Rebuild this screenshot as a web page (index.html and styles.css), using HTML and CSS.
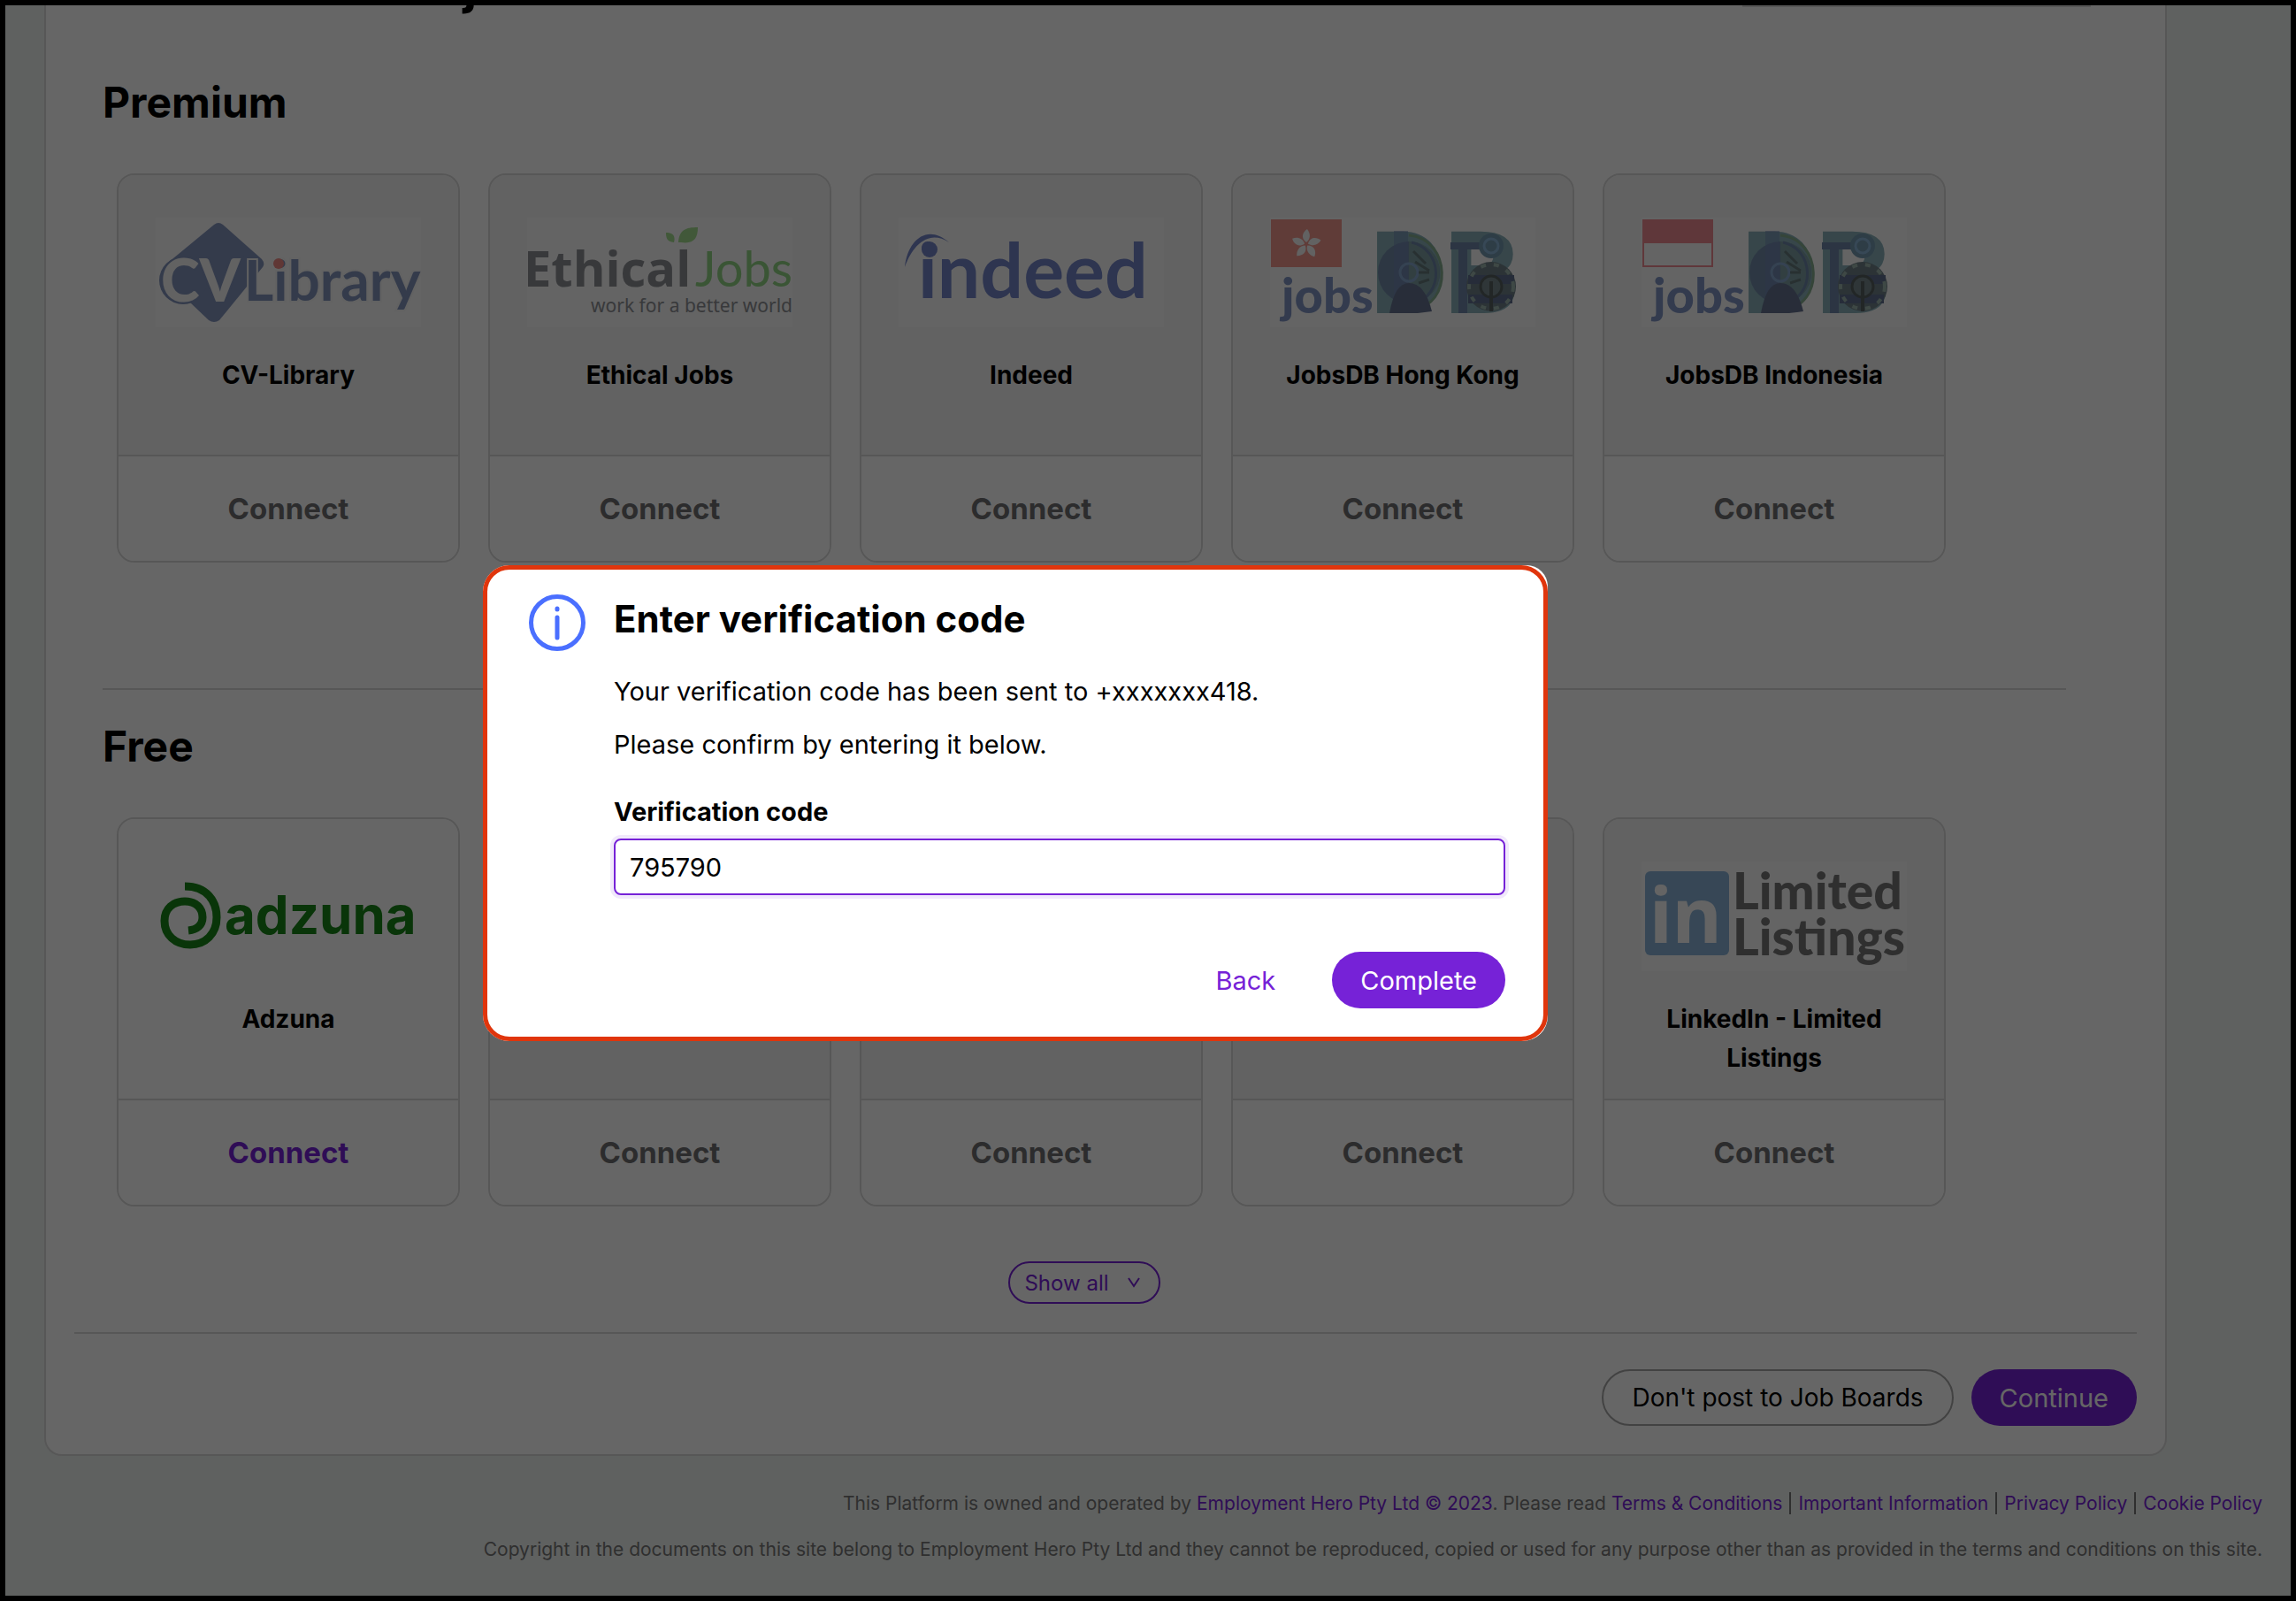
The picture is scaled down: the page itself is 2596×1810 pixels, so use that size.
FILE: index.html
```html
<!DOCTYPE html>
<html lang="en">
<head>
<meta charset="utf-8">
<title>Job boards - Enter verification code</title>
<link rel="stylesheet" href="styles.css">
</head>
<body>
<main class="panel">
  <div class="panel-top">
    <span class="panel-top-title">j</span>
    <span class="panel-top-field"></span>
  </div>

  <section class="boards">
    <h2 class="boards-title">Premium</h2>
    <ul class="cards">
      <li class="card">
        <div class="card-head">
          <svg class="logo logo-framed" viewBox="0 0 300 124" aria-hidden="true">
            <path d="M66 8q5-4 10 0l44 39q4 5 1 9l-49 60q-6 4-12 0l-42-40 2-30z" fill="#8293bb"/>
            <circle cx="31" cy="71" r="27" fill="#8293bb"/>
            <text class="cv-letters" x="6" y="95">CV</text>
            <text class="cv-library" x="100" y="94">Library</text>
            <circle cx="139" cy="52" r="6" fill="#ef8a84"/>
          </svg>
          <h3 class="card-title">CV-Library</h3>
        </div>
        <button class="connect" type="button" disabled>Connect</button>
      </li>
      <li class="card">
        <div class="card-head">
          <svg class="logo logo-framed" viewBox="0 0 300 124" aria-hidden="true">
            <text class="ethical" x="-4" y="78">Ethical</text>
            <text class="ethical-jobs" x="190" y="78">Jobs</text>
            <text class="ethical-tag" x="300" y="107" text-anchor="end">work for a better world</text>
            <path d="M171 28c1-14 8-17 22-17 0 13-5 19-19 17zM166 28c-8-1-9-5-9-11 8 0 11 4 9 11z" fill="#a2dd90"/>
          </svg>
          <h3 class="card-title">Ethical Jobs</h3>
        </div>
        <button class="connect" type="button" disabled>Connect</button>
      </li>
      <li class="card">
        <div class="card-head">
          <svg class="logo logo-framed" viewBox="0 0 300 124" aria-hidden="true">
            <text class="indeed" x="22" y="91">indeed</text>
            <circle cx="35" cy="36" r="9" fill="#7384c8"/>
            <path d="M7 56C10 26 32 6 57 28 35 13 16 30 7 56z" fill="#7384c8"/>
          </svg>
          <h3 class="card-title">Indeed</h3>
        </div>
        <button class="connect" type="button" disabled>Connect</button>
      </li>
      <li class="card">
        <div class="card-head">
          <svg class="logo logo-framed" viewBox="0 0 300 124" aria-hidden="true">
            <rect x="1" y="2" width="80" height="54" fill="#f0968c"/>
            <g fill="#f4f4f4" transform="translate(41 30)">
              <path id="petal" d="M0-2C-7-7-4-14 1-17 5-12 5-6 0-2z"/>
              <use href="#petal" transform="rotate(72)"/>
              <use href="#petal" transform="rotate(144)"/>
              <use href="#petal" transform="rotate(216)"/>
              <use href="#petal" transform="rotate(288)"/>
            </g>
            <g id="jobsdb">
              <text class="jobs" x="13" y="108">jobs</text>
              <text class="db" x="114" y="108">DB</text>
              <circle cx="157" cy="62" r="35" fill="#7289a8"/>
              <path d="M157 27a35 35 0 0 1 0 70z" fill="#7d9fa4"/>
              <path d="M140 15h16v93h-16z" fill="#6f86b4" opacity=".5"/>
              <g fill="none" stroke-width="3">
                <circle cx="157" cy="62" r="10" stroke="#86a6cc"/>
                <path d="M157 20c48 4 50 80 4 84" stroke="#84ac90"/>
                <path d="M160 28c36 8 36 60 4 68" stroke="#6d84a8"/>
                <path d="M162 38l14 14M168 62h12M164 50l16 10M168 74l12-4" stroke="#64797c"/>
              </g>
              <path d="M135 108q6-34 22-34 18 0 26 32l-16 2z" fill="#657290"/>
              <path d="M204 28h36v8h-36zM213 36h10v72h-10z" fill="#6f86a8"/>
              <circle cx="250" cy="32" r="14" fill="#7498b0"/>
              <circle cx="250" cy="32" r="8" fill="none" stroke="#8ab4d8" stroke-width="3"/>
              <circle cx="250" cy="78" r="28" fill="#6f8088"/>
              <path d="M224 70h52M224 92h50" stroke="#5f6f90" stroke-width="10"/>
              <circle cx="250" cy="78" r="25" fill="none" stroke="#9cb4ac" stroke-width="4" stroke-dasharray="6 9"/>
              <circle cx="250" cy="78" r="12" fill="#76888c" stroke="#566060" stroke-width="3"/>
              <path d="M250 72v34" stroke="#566060" stroke-width="4"/>
            </g>
          </svg>
          <h3 class="card-title">JobsDB Hong Kong</h3>
        </div>
        <button class="connect" type="button" disabled>Connect</button>
      </li>
      <li class="card">
        <div class="card-head">
          <svg class="logo logo-framed" viewBox="0 0 300 124" aria-hidden="true">
            <rect x="2" y="3" width="78" height="52" fill="#fafafa" stroke="#ee8a91" stroke-width="2"/>
            <rect x="1" y="2" width="80" height="27" fill="#ee8a91"/>
            <use href="#jobsdb"/>
          </svg>
          <h3 class="card-title">JobsDB Indonesia</h3>
        </div>
        <button class="connect" type="button" disabled>Connect</button>
      </li>
    </ul>
  </section>

  <section class="boards boards-divided">
    <h2 class="boards-title">Free</h2>
    <ul class="cards">
      <li class="card">
        <div class="card-head card-head-active">
          <svg class="logo" viewBox="0 0 300 124" aria-hidden="true">
            <path d="M33 28C58 28 69 45 69 63 69 82 56 94 39 94 22 94 10 83 10 67 10 53 20 45 33 45 46 45 53 53 53 63 53 72 47 77 37 78" fill="none" stroke="#188418" stroke-width="9"/>
            <text class="adzuna" x="78" y="82">adzuna</text>
          </svg>
          <h3 class="card-title">Adzuna</h3>
        </div>
        <button class="connect connect-active" type="button">Connect</button>
      </li>
      <li class="card">
        <div class="card-head"></div>
        <button class="connect" type="button" disabled>Connect</button>
      </li>
      <li class="card">
        <div class="card-head"></div>
        <button class="connect" type="button" disabled>Connect</button>
      </li>
      <li class="card">
        <div class="card-head"></div>
        <button class="connect" type="button" disabled>Connect</button>
      </li>
      <li class="card">
        <div class="card-head">
          <svg class="logo logo-framed" viewBox="0 0 300 124" aria-hidden="true">
            <rect x="4" y="11" width="95" height="95" rx="6" fill="#8ab2d6"/>
            <text class="linkedin-in" x="9" y="92">in</text>
            <text class="linkedin-text" x="103" y="54">Limited</text>
            <text class="linkedin-text" x="103" y="106">Listings</text>
          </svg>
          <h3 class="card-title">LinkedIn - Limited Listings</h3>
        </div>
        <button class="connect" type="button" disabled>Connect</button>
      </li>
    </ul>
    <button class="show-all" type="button">Show all
      <svg class="chevron" viewBox="0 0 16 12" aria-hidden="true"><path d="M2 1l6 9 6-9" fill="none" stroke="currentColor" stroke-width="2"/></svg>
    </button>
  </section>

  <div class="actions">
    <button class="button button-outline" type="button">Don't post to Job Boards</button>
    <button class="button button-primary" type="button">Continue</button>
  </div>
</main>

<footer class="footer">
  <p class="footer-line">This Platform is owned and operated by <a href="#">Employment Hero Pty Ltd © 2023</a>. Please read <a href="#">Terms &amp; Conditions</a><a class="footer-link" href="#">Important Information</a><a class="footer-link" href="#">Privacy Policy</a><a class="footer-link" href="#">Cookie Policy</a></p>
  <p class="footer-line">Copyright in the documents on this site belong to Employment Hero Pty Ltd and they cannot be reproduced, copied or used for any purpose other than as provided in the terms and conditions on this site.</p>
</footer>

<div class="overlay">
  <form class="modal" role="dialog" aria-labelledby="modal-title">
    <svg class="info" viewBox="0 0 64 64" aria-hidden="true">
      <circle cx="32" cy="32" r="29.5" fill="none" stroke="#4a6fff" stroke-width="5"/>
      <path d="M32 16v1M32 26v23" stroke="#4a6fff" stroke-width="5" stroke-linecap="round"/>
    </svg>
    <div class="modal-body">
      <h1 class="modal-title" id="modal-title">Enter verification code</h1>
      <p class="modal-text">Your verification code has been sent to +xxxxxxx418.</p>
      <p class="modal-text">Please confirm by entering it below.</p>
      <label class="modal-label" for="code">Verification code</label>
      <input class="modal-input" id="code" type="text" value="795790">
      <div class="modal-actions">
        <button class="button button-text" type="button">Back</button>
        <button class="button button-primary" type="submit">Complete</button>
      </div>
    </div>
  </form>
</div>
</body>
</html>
```
FILE: styles.css
```css
:root {
  --purple: #7622d7;
  --line: #dadada;
}

* {
  box-sizing: border-box;
}

body {
  margin: 0;
  min-height: 100vh;
  border: 6px solid #000;
  background: #eef2f0;
  color: #000;
  font-family: Inter, "Liberation Sans", sans-serif;
  font-size: 29px;
}

h1, h2, h3, p, ul {
  margin: 0;
  padding: 0;
}

button, input {
  font: inherit;
}

a {
  color: var(--purple);
  text-decoration: none;
}

/* Page panel */
.panel {
  margin: 0 140px 0 44px;
  padding: 0 32px 32px;
  border: 2px solid var(--line);
  border-top: 0;
  border-radius: 0 0 20px 20px;
  background: #fff;
}

.panel-top {
  display: flex;
  justify-content: space-between;
  align-items: flex-end;
  height: 10px;
  padding: 0 52px 0 440px;
  overflow: hidden;
}

.panel-top-title {
  font-size: 56px;
  font-weight: 700;
  line-height: 64px;
}

.panel-top-field {
  align-self: flex-start;
  width: 394px;
  height: 2px;
  background: var(--line);
}

/* Job board sections */
.boards {
  display: flex;
  flex-direction: column;
  margin: 0 80px 0 32px;
  padding: 68px 0 142px;
}

.boards-divided {
  padding: 32px 0;
  border-top: 2px solid var(--line);
}

.boards-title {
  font-size: 48px;
  font-weight: 700;
  line-height: 64px;
}

.cards {
  display: grid;
  grid-template-columns: repeat(5, minmax(0, 388px));
  gap: 32px;
  margin: 48px 16px 0;
  list-style: none;
}

.card {
  display: flex;
  flex-direction: column;
  min-height: 440px;
  overflow: hidden;
  border: 2px solid var(--line);
  border-radius: 20px;
}

.card-head {
  display: flex;
  flex: 1;
  flex-direction: column;
  align-items: center;
  gap: 32px;
  padding: 48px 40px 0;
  border-bottom: 2px solid var(--line);
  background: #f4f4f4;
}

.card-head-active {
  background: #fff;
}

.card-title {
  font-size: 28px;
  font-weight: 700;
  line-height: 44px;
  text-align: center;
}

.connect {
  height: 118px;
  border: 0;
  background: #fff;
  color: #6f6f71;
  font-size: 33px;
  font-weight: 700;
}

.connect-active {
  color: var(--purple);
}

.show-all {
  display: flex;
  align-self: center;
  align-items: center;
  gap: 20px;
  height: 48px;
  margin-top: 62px;
  padding: 0 20px 0 16px;
  border: 2px solid var(--purple);
  border-radius: 24px;
  background: #fff;
  color: var(--purple);
  font-size: 24px;
}

.chevron {
  width: 16px;
  height: 12px;
}

/* Logos */
.logo {
  width: 300px;
  height: 124px;
  flex: none;
}

.logo-framed {
  background: #f9f9f9;
}

.cv-letters {
  fill: #f4f4f4;
  stroke: #8293bb;
  stroke-width: 4px;
  paint-order: stroke;
  font: 900 66px Lato, sans-serif;
}

.cv-library {
  fill: #8293bb;
  stroke: #f4f4f4;
  stroke-width: 4px;
  paint-order: stroke;
  font: 700 64px Lato, sans-serif;
}

.ethical {
  fill: #8c8e93;
  font: 700 56px "Open Sans", sans-serif;
}

.ethical-jobs {
  fill: #91d484;
  font: 400 56px Lato, sans-serif;
}

.ethical-tag {
  fill: #8c8e93;
  font: 21px "Noto Sans", sans-serif;
}

.indeed {
  fill: #7384c8;
  font: 700 86px Lato, sans-serif;
}

.db {
  fill: #89b0b8;
  font: 900 130px Roboto, sans-serif;
}

.jobs {
  fill: #8095c4;
  font: 900 56px Lato, sans-serif;
}

.adzuna {
  fill: #188418;
  font: 700 60px Inter, sans-serif;
}

.linkedin-in {
  fill: #f9f9f9;
  font: 700 86px "Noto Sans", sans-serif;
}

.linkedin-text {
  fill: #767676;
  font: 900 57px Lato, sans-serif;
}

/* Buttons */
.actions {
  display: flex;
  justify-content: flex-end;
  gap: 20px;
  padding-top: 40px;
  border-top: 2px solid var(--line);
}

.button {
  height: 64px;
  padding: 0 32px;
  border: 0;
  border-radius: 32px;
  background: none;
}

.button-primary {
  background: var(--purple);
  color: #fff;
}

.button-outline {
  border: 2px solid #a5a5a5;
  background: #fff;
  font-size: 28px;
}

.button-text {
  color: var(--purple);
}

/* Footer */
.footer {
  margin-top: 28px;
  padding: 0 32px 26px;
  color: #777;
  font-size: 21px;
  line-height: 52px;
  text-align: right;
}

.footer-link {
  margin-left: 8px;
  padding-left: 8px;
  border-left: 2px solid #777;
}

/* Verification dialog */
.overlay {
  position: fixed;
  inset: 0;
  display: flex;
  align-items: center;
  justify-content: center;
  padding: 6px 300px 0 0;
  background: rgba(0, 0, 0, 0.6);
}

.modal {
  position: relative;
  display: flex;
  align-items: flex-start;
  gap: 32px;
  width: 1204px;
  padding: 33px 48px 37px 52px;
  border-radius: 30px 24px 28px 30px;
  background: #fff;
}

.modal::after {
  content: "";
  position: absolute;
  inset: 0;
  border: 5px solid #e0350c;
  border-radius: 30px;
  pointer-events: none;
}

.info {
  width: 64px;
  height: 64px;
  flex: none;
}

.modal-body {
  display: flex;
  flex: 1;
  flex-direction: column;
}

.modal-title {
  margin-bottom: 24px;
  font-size: 42px;
  font-weight: 700;
  line-height: 56px;
}

.modal-text {
  line-height: 60px;
}

.modal-label {
  padding: 20px 0 4px;
  font-weight: 700;
  line-height: 52px;
}

.modal-input {
  width: 100%;
  height: 64px;
  padding: 0 16px;
  border: 2px solid var(--purple);
  border-radius: 8px;
  outline: 0;
  box-shadow: 0 0 0 4px #f1e9fb;
}

.modal-actions {
  display: flex;
  justify-content: flex-end;
  gap: 32px;
  padding-top: 64px;
}
```
